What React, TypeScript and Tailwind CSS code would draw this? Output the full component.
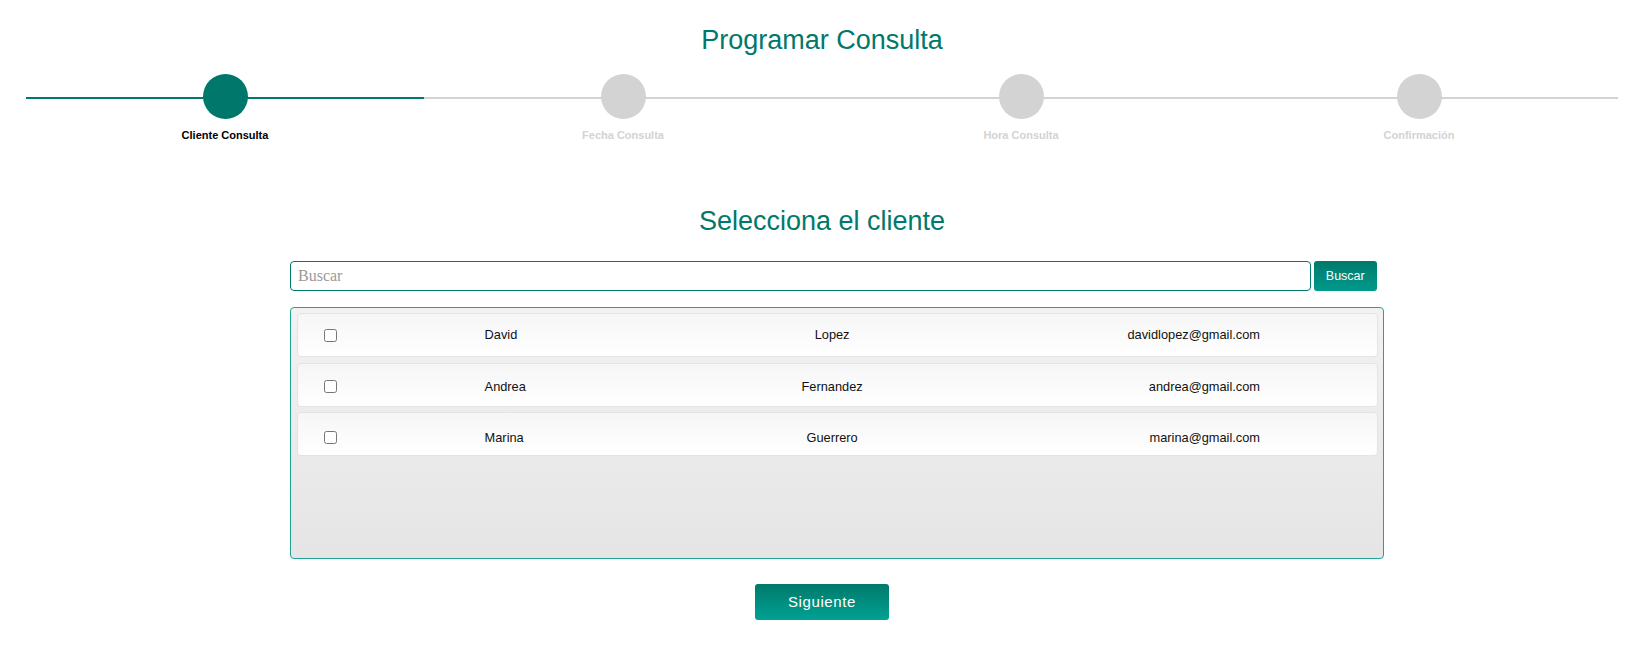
import { useState } from "react";

interface Client {
    id: number;
    name: string;
    surname: string;
    email: string;
    shift: string;
}

// rows in the design aren't perfectly centred, the content drifts down a bit
const clients: Client[] = [
    { id: 1, name: "David", surname: "Lopez", email: "davidlopez@gmail.com", shift: "pt-0" },
    { id: 2, name: "Andrea", surname: "Fernandez", email: "andrea@gmail.com", shift: "pt-[4.6px]" },
    { id: 3, name: "Marina", surname: "Guerrero", email: "marina@gmail.com", shift: "pt-[6.8px]" },
];

const steps = ["Cliente Consulta", "Fecha Consulta", "Hora Consulta", "Confirmación"];

export default function App() {
    const [selected, setSelected] = useState<number[]>([]);
    const [query, setQuery] = useState("");
    const current = 0;

    const toggle = (id: number) => {
        setSelected((prev) => (prev.includes(id) ? prev.filter((x) => x !== id) : [...prev, id]));
    };

    return (
        <div className="min-h-[651px] bg-white font-['Liberation_Sans',Arial,sans-serif]">
            <div className="w-[1644px] flex flex-col">
                {/* Title */}
                <h1 className="mt-[25px] text-center text-[27px] leading-[30px] text-[#00796b]">
                    Programar Consulta
                </h1>

                {/* Stepper */}
                <div className="ml-[26px] mt-[19px] flex">
                    {steps.map((step, i) => (
                        <div key={step} className="relative w-[398px] flex flex-col items-center">
                            <div
                                className={
                                    i <= current
                                        ? "absolute left-0 right-0 top-[23px] h-[2px] bg-[#00796b]"
                                        : "absolute left-0 right-0 top-[23px] h-[2px] bg-[#d3d3d3]"
                                }
                            />
                            <div
                                className={
                                    i <= current
                                        ? "relative w-[45px] h-[45px] rounded-full bg-[#00776b]"
                                        : "relative w-[45px] h-[45px] rounded-full bg-[#d3d3d3]"
                                }
                            />
                            <span
                                className={
                                    i === current
                                        ? "mt-[10px] text-[11px] leading-[13px] font-bold text-black"
                                        : "mt-[10px] text-[11px] leading-[13px] font-bold text-[#d3d3d3]"
                                }
                            >
                                {step}
                            </span>
                        </div>
                    ))}
                </div>

                {/* Subtitle */}
                <h2 className="mt-[64px] text-center text-[27px] leading-[30px] text-[#00796b]">
                    Selecciona el cliente
                </h2>

                {/* Search */}
                <div className="mt-[25px] ml-[290px] flex">
                    <input
                        value={query}
                        onChange={(e) => setQuery(e.target.value)}
                        placeholder="Buscar"
                        className="w-[1021px] h-[30px] border border-[#00796b] rounded-[4px] pl-[7px] font-['Liberation_Serif',serif] text-[16px] placeholder:text-[#9a9a9a] outline-none"
                    />
                    <button className="ml-[3px] w-[62.5px] h-[30px] rounded-[3px] bg-gradient-to-b from-[#00796b] to-[#009a8c] text-white text-[12.5px]">
                        Buscar
                    </button>
                </div>

                {/* Client list */}
                <div className="mt-[16px] ml-[290px] w-[1094px] h-[252px] border border-[#1ea596] rounded-[4px] bg-gradient-to-b from-[#f2f2f2] to-[#e5e5e5] pl-[6px] pr-[5px] pt-[5px] flex flex-col gap-[5.5px]">
                    {clients.map((c) => (
                        <div
                            key={c.id}
                            className={`h-[44px] flex items-center border border-[#e4e4e4] rounded-[4px] bg-gradient-to-b from-[#f6f6f6] to-[#ffffff] text-[12.8px] text-[#111] ${c.shift}`}
                        >
                            <div className="pl-[26px] flex items-center">
                                <input
                                    type="checkbox"
                                    checked={selected.includes(c.id)}
                                    onChange={() => toggle(c.id)}
                                    className="m-0 w-[13px] h-[13px]"
                                />
                            </div>
                            <div className="ml-[147.6px] w-[250px]">{c.name}</div>
                            <div className="w-[195px] text-center">{c.surname}</div>
                            <div className="w-[330.4px] text-right">{c.email}</div>
                        </div>
                    ))}
                </div>

                {/* Next */}
                <div className="mt-[25px] flex justify-center">
                    <button className="w-[134px] h-[36px] rounded-[3px] bg-gradient-to-b from-[#00796b] to-[#00a294] text-white text-[15px] tracking-[0.6px]">
                        Siguiente
                    </button>
                </div>
            </div>
        </div>
    );
}
